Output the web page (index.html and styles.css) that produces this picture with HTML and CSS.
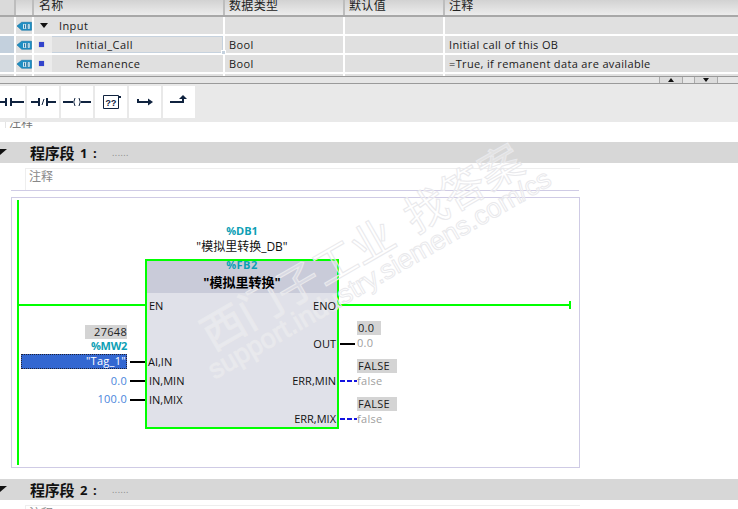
FILE: index.html
```html
<!DOCTYPE html>
<html lang="zh">
<head>
<meta charset="utf-8">
<title>程序段</title>
<link rel="stylesheet" href="styles.css">
</head>
<body>
<section class="iface">
  <div class="row head">
    <div class="c c-num"></div><div class="c c-ico"></div>
    <div class="c c-name">名称</div><div class="c c-type">数据类型</div>
    <div class="c c-def">默认值</div><div class="c c-com">注释</div>
  </div>
  <div class="row">
    <div class="c c-num"></div>
    <div class="c c-ico"><svg class="tag" viewBox="0 0 16 10"><path class="tag-b" d="M0 5 5 1H15.500V9.500H5Z"/><rect class="tag-w" x="6.500" y="3" width="7" height="5"/><path class="tag-l" d="M8 3.500V7.500M10 3.500H11.500V7.500H10Z"/></svg></div>
    <div class="c c-name"><span class="tri-down"></span><span class="grp">Input</span></div>
    <div class="c c-type"></div><div class="c c-def"></div><div class="c c-com"></div>
  </div>
  <div class="row">
    <div class="c c-num num-sel"></div>
    <div class="c c-ico"><svg class="tag" viewBox="0 0 16 10"><path class="tag-b" d="M0 5 5 1H15.500V9.500H5Z"/><rect class="tag-w" x="6.500" y="3" width="7" height="5"/><path class="tag-l" d="M8 3.500V7.500M10 3.500H11.500V7.500H10Z"/></svg></div>
    <div class="c c-name sel"><span class="gutter"><i class="sq"></i></span><span class="nm">Initial_Call</span><i class="handle"></i></div>
    <div class="c c-type">Bool</div><div class="c c-def"></div><div class="c c-com">Initial call of this OB</div>
  </div>
  <div class="row">
    <div class="c c-num num-plain"></div>
    <div class="c c-ico"><svg class="tag" viewBox="0 0 16 10"><path class="tag-b" d="M0 5 5 1H15.500V9.500H5Z"/><rect class="tag-w" x="6.500" y="3" width="7" height="5"/><path class="tag-l" d="M8 3.500V7.500M10 3.500H11.500V7.500H10Z"/></svg></div>
    <div class="c c-name"><span class="gutter"><i class="sq"></i></span><span class="nm">Remanence</span></div>
    <div class="c c-type">Bool</div><div class="c c-def"></div><div class="c c-com">=True, if remanent data are available</div>
  </div>
  <div class="row stub">
    <div class="c c-num"></div><div class="c c-ico"></div><div class="c c-name"></div>
    <div class="c c-type"></div><div class="c c-def"></div><div class="c c-com"></div>
  </div>
</section>
<div class="split">
  <span class="split-btn"><i class="up"></i></span>
  <span class="split-btn"><i class="down"></i></span>
</div>
<nav class="toolbar">
  <button class="tb first"><svg viewBox="0 0 25 32"><path d="M-3 16H6M6 12V20M11 12V20M11 16H24"/></svg></button>
  <button class="tb"><svg viewBox="0 0 32 32"><path d="M4 16H12M12 12V20M20 12V20M20 16H29"/><path class="thin" d="M15 19 17 13"/></svg></button>
  <button class="tb"><svg viewBox="0 0 32 32"><path d="M2 16H12M20 16H30"/><path class="thin" d="M14 12Q11.500 16 14 20M18 12Q20.500 16 18 20"/></svg></button>
  <button class="tb"><svg viewBox="0 0 32 32"><path class="thin" d="M8.500 9.500H23.500V22.500H8.500Z"/><path d="M23 11H26"/><text x="16" y="19.500">??</text></svg></button>
  <button class="tb"><svg viewBox="0 0 32 32"><path d="M9 13V16H20"/><path class="fill" d="M19 12.500 24 16 19 19.500Z"/></svg></button>
  <button class="tb"><svg viewBox="0 0 32 32"><path d="M7 16H20V12"/><path class="fill" d="M16 13 20 9 24 13Z"/></svg></button>
</nav>
<main class="editor">
  <div class="block-comment">注释</div>

  <header class="net-head"><i class="tri-corner"></i><b class="net-title">程序段</b><b class="net-no">1 :</b><span class="net-dots">......</span></header>
  <div class="net-comment">注释</div>
  <div class="net-rule"></div>

  <div class="canvas">
    <i class="rail"></i>
    <i class="wire en-in"></i>
    <i class="wire eno-out"></i>
    <i class="cap"></i>

    <div class="lbl teal db-addr">%DB1</div>
    <div class="lbl db-name">"模拟里转换_DB"</div>

    <div class="fb">
      <div class="fb-head"></div>
    </div>
    <div class="lbl teal fb-addr">%FB2</div>
    <div class="lbl fb-name">"模拟里转换"</div>
    <span class="pin pl p-en">EN</span>
    <span class="pin pl p-ai">AI,IN</span>
    <span class="pin pl p-min">IN,MIN</span>
    <span class="pin pl p-mix">IN,MIX</span>
    <span class="pin pr p-eno">ENO</span>
    <span class="pin pr p-out">OUT</span>
    <span class="pin pr p-emin">ERR,MIN</span>
    <span class="pin pr p-emix">ERR,MIX</span>

    <div class="val mon v-27648">27648</div>
    <div class="lbl teal v-mw">%MW2</div>
    <div class="val v-tag">"Tag_1"</div>
    <i class="stubw w-ai"></i><i class="stubw w-min"></i><i class="stubw w-mix"></i>
    <div class="val blue v-min">0.0</div>
    <div class="val blue v-max">100.0</div>

    <i class="stubw w-out"></i>
    <i class="dash w-emin"></i>
    <i class="dash w-emix"></i>
    <div class="val mon m-out">0.0</div>
    <div class="val grey g-out">0.0</div>
    <div class="val mon m-emin">FALSE</div>
    <div class="val grey g-emin">false</div>
    <div class="val mon m-emix">FALSE</div>
    <div class="val grey g-emix">false</div>
  </div>

  <header class="net-head second"><i class="tri-corner"></i><b class="net-title">程序段</b><b class="net-no">2 :</b><span class="net-dots">......</span></header>
  <div class="net-comment">注释</div>
</main>
<div class="wm wm-cn">西门子工业&nbsp;&nbsp;找答案</div>
<div class="wm wm-url">support.industry.siemens.com/cs</div>
</body>
</html>
```
FILE: styles.css
```css
* { box-sizing: border-box; }
html, body { margin: 0; padding: 0; }
body {
  width: 738px; height: 509px; overflow: hidden; position: relative;
  background: #fff; color: #1a1a1a;
  font: 11px "Open Sans", "Noto Sans CJK SC", sans-serif;
}
i { display: block; font-style: normal; }

/* interface table */
.iface { height: 76px; background: #e0e0e0; overflow: hidden; }
.row { display: flex; height: 19px; border-bottom: 2px solid #fff; }
.row.head {
  height: 17px; border-bottom: 2px solid #a8a8a8;
  background: linear-gradient(#d2d2d2, #e2e2e2 60%, #ececec);
}
.row.head .c {
  font-size: 12px; line-height: 12px; align-items: flex-start; color: #222;
  border-right-color: #bdbdbd;
}
.row.stub { height: 10px; border: 0; }
.c {
  display: flex; align-items: center; position: relative; flex: none;
  border-right: 2px solid #fff; padding-left: 4px; white-space: nowrap;
  letter-spacing: .35px;
}
.c-num { width: 16px; padding: 0; background: #dadada; }
.c-ico { width: 18px; padding: 0 0 0 1px; }
.c-name { width: 191px; padding-left: 0; }
.c-type { width: 120px; }
.c-def { width: 100px; }
.c-com { flex: 1; border-right: 0; }
.row.head .c-name { padding-left: 5px; }
.num-sel { background: #c3d0dd; }
.num-plain { background: #d4dae0; }
.tag { width: 16px; height: 10px; display: block; }
.tag-b { fill: #1f8fc4; stroke: #0f6f9f; stroke-width: .6; }
.tag-w { fill: #e6f3fa; }
.tag-l { fill: none; stroke: #1a6f9f; stroke-width: 1; }
.tri-down {
  width: 0; height: 0; margin: 0 11px 0 6px;
  border: 4px solid transparent; border-top: 5px solid #111; border-bottom: 0;
}
.grp { letter-spacing: .4px; }
.gutter {
  width: 18px; height: 100%; background: #ebebeb; flex: none;
  display: flex; align-items: center; padding-left: 5px;
}
.sq { width: 5px; height: 5px; background: #3344cc; box-shadow: 0 0 1px #99a; }
.nm { margin-left: 24px; letter-spacing: .45px; }
.sel { box-shadow: inset 0 0 0 1px #c6d2de; }
.handle {
  position: absolute; right: -3px; bottom: -2px; width: 5px; height: 5px;
  background: #c5d2df; border: 1px solid #fff; z-index: 2;
}

/* splitter */
.split {
  height: 8px; background: #e6e6e6;
  border-top: 1px solid #9a9a9a; border-bottom: 1px solid #9a9a9a;
  display: flex; justify-content: flex-end; gap: 11px; padding-right: 20px;
}
.split-btn {
  width: 24px; height: 6px; background: #dcdcdc; display: flex; justify-content: center;
  border-left: 1px solid #aaa; border-right: 1px solid #aaa;
}
.up { width: 0; height: 0; margin-top: 1px; border: 3px solid transparent; border-bottom: 4px solid #111; border-top: 0; }
.down { width: 0; height: 0; margin-top: 1px; border: 3px solid transparent; border-top: 4px solid #111; border-bottom: 0; }

/* toolbar */
.toolbar {
  height: 38px; background: #e9e9e9; display: flex; align-items: flex-start;
  gap: 2px; padding-top: 2px;
}
.tb {
  width: 32px; height: 32px; padding: 0; border: 0; background: #fff; flex: none;
}
.tb.first { width: 25px; }
.tb.first svg { width: 25px; }
.tb svg { width: 32px; height: 32px; display: block; }
.tb path { fill: none; stroke: #10233f; stroke-width: 2; }
.tb path.thin { stroke-width: 1; }
.tb path.fill { fill: #10233f; stroke: none; }
.tb text { font: bold 9px "Liberation Mono", monospace; fill: #10233f; text-anchor: middle; }

/* editor */
.editor { padding: 0; position: relative; }
.block-comment {
  height: 20px; margin-left: 5px; padding-left: 3px; color: #777;
  border-left: 1px solid #e4e4e4; font-size: 12px; line-height: 12px;
  margin-top: -5px; clip-path: inset(5px 0 9px 0);
}
.net-head {
  height: 21px; background: #d7d7d7; display: flex; align-items: center; position: relative;
  margin-top: 5px; padding-left: 30px; color: #111;
}
.tri-corner {
  position: absolute; left: 0; top: 7px; width: 0; height: 0;
  border-top: 6px solid #111; border-left: 0; border-right: 7px solid transparent;
}
.net-title { font-size: 15px; letter-spacing: -.3px; }
.net-no { font-size: 13px; margin-left: 6px; letter-spacing: 1px; width: 32px; }
.net-dots { color: #888; font-size: 9px; letter-spacing: .4px; }
.net-comment {
  margin: 5px 158px 0 25px; height: 22px; color: #888; font-size: 12px;
  padding: 0 0 0 3px; line-height: 15px;
  border-top: 1px solid #eee; border-left: 1px solid #eee;
}
.net-rule { margin: 0 159px 0 11px; height: 1px; background: #cfcbe5; }

/* diagram canvas */
.canvas {
  position: relative; margin: 6px 158px 0 11px; height: 271px;
  border: 1px solid #cfcbe5; background: #fff;
}
.canvas > * { position: absolute; }
.rail { left: 5px; top: 2px; width: 2px; height: 265px; background: #00ff00; }
.wire { height: 2px; background: #00ff00; }
.en-in { left: 7px; top: 106px; width: 127px; }
.eno-out { left: 327px; top: 106px; width: 231px; }
.cap { left: 557px; top: 103px; width: 2px; height: 8px; background: #00ff00; }

.lbl { white-space: nowrap; text-align: center; line-height: 13px; z-index: 2; }
.teal { color: #0d9fb5; font-weight: 700; }
.db-addr { left: 180px; width: 100px; top: 26px; }
.db-name { left: 150px; width: 160px; top: 42px; color: #111; font-size: 12px; letter-spacing: 0; }

.fb {
  left: 133px; top: 61px; width: 194px; height: 170px;
  border: 2px solid #00ff00; background: #e0e1e9;
}
.fb-head { height: 32px; background: #c9cbd9; }
.fb-addr { left: 133px; width: 194px; top: 60px; letter-spacing: .5px; }
.fb-name { left: 133px; width: 194px; top: 78px; font-weight: 700; color: #000; font-size: 13px; }

.pin { line-height: 14px; white-space: nowrap; color: #111; z-index: 2; }
.pl { left: 137px; }
.pr { right: 243px; }
.p-en { top: 101px; }
.p-ai { top: 157px; left: 136px; }
.p-min { top: 176px; }
.p-mix { top: 195px; }
.p-eno { top: 101px; }
.p-out { top: 139px; }
.p-emin { top: 176px; }
.p-emix { top: 214px; }

.val { white-space: nowrap; line-height: 14px; height: 14px; letter-spacing: .3px; z-index: 2; }
.mon { background: #d4d4d4; color: #222; }
.blue { color: #4a86dc; text-align: right; width: 60px; left: 55px; }
.grey { color: #a0a0a0; left: 345px; }
.v-27648 { left: 73px; top: 127px; width: 42px; text-align: right; }
.v-mw { left: 70px; width: 45px; text-align: right; top: 141px; letter-spacing: -.3px; }
.v-tag {
  left: 9px; top: 156px; width: 106px; height: 15px; text-align: right; color: #fff;
  background: #3367d1; outline: 1px dotted #223; outline-offset: -1px; padding-right: 1px;
}
.stubw { height: 2px; width: 15px; background: #000; }
.w-ai { left: 118px; top: 163px; }
.w-min { left: 118px; top: 182px; }
.w-mix { left: 118px; top: 201px; }
.v-min { top: 176px; }
.v-max { top: 194px; }
.w-out { left: 328px; top: 145px; }
.dash {
  width: 17px; height: 2px;
  background: repeating-linear-gradient(90deg, #1414e0 0 5px, transparent 5px 7px);
}
.w-emin { left: 328px; top: 182px; }
.w-emix { left: 328px; top: 220px; }
.m-out { left: 345px; top: 123px; width: 24px; padding-left: 1px; }
.g-out { top: 138px; }
.m-emin { left: 345px; top: 161px; width: 40px; padding-left: 1px; }
.g-emin { top: 176px; }
.m-emix { left: 345px; top: 199px; width: 40px; padding-left: 1px; }
.g-emix { top: 214px; }

.second { margin-top: 11px; }

/* watermark */
.wm {
  position: absolute; z-index: 1; white-space: nowrap; color: rgba(255,255,255,.3);
  -webkit-text-stroke: 1px #e9e9ec;
  transform: rotate(-30deg); transform-origin: 0 100%; pointer-events: none;
}
.wm-cn { left: 214px; top: 311px; font: 400 43px/1 "Noto Sans CJK SC", sans-serif; letter-spacing: 0; }
.wm-url { left: 217px; top: 357px; font: 27px/1 "Liberation Sans", sans-serif; }
```
